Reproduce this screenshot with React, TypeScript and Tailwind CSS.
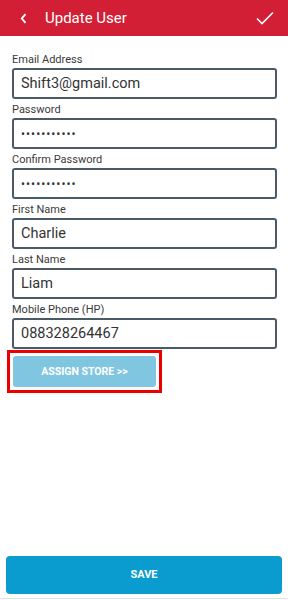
import React from "react";

const fields = [
  { label: "Email Address", value: "Shift3@gmail.com", pw: false },
  { label: "Password", value: "•••••••••••", pw: true },
  { label: "Confirm Password", value: "•••••••••••", pw: true },
  { label: "First Name", value: "Charlie", pw: false },
  { label: "Last Name", value: "Liam", pw: false },
  { label: "Mobile Phone (HP)", value: "088328264467", pw: false },
];

export default function App() {
  return (
    <div
      className="w-[288px] h-[600px] bg-white flex flex-col overflow-hidden"
      style={{ fontFamily: "Roboto, 'Noto Sans', sans-serif" }}
    >
      <div className="h-[36px] bg-[#d21f35] flex items-center shrink-0">
        <svg className="ml-[20px]" width="7" height="11" viewBox="0 0 7 11">
          <path d="M5.5 1.2 L1.8 5.5 L5.5 9.8" fill="none" stroke="white" strokeWidth="1.9" />
        </svg>
        <span className="ml-[18px] text-white text-[15px] leading-none">Update User</span>
        <div className="flex-1" />
        <svg className="mr-[14px]" width="18" height="14" viewBox="0 0 18 14">
          <path d="M1 7.5 L6 12.5 L17 1.5" fill="none" stroke="white" strokeWidth="1.6" />
        </svg>
      </div>
      <div className="pl-3 pr-[11px] pt-[13px] flex flex-col">
        {fields.map((f) => (
          <div key={f.label} className="flex flex-col">
            <div className="h-[19px] text-[11px] leading-[14px] pt-[4px] text-[#3a3a3a]">{f.label}</div>
            <div className="h-[31px] border-2 border-[#4a5a67] rounded-[3px] flex items-center pl-[7px] text-[#333]">
              <span className={f.pw ? "text-[12px] tracking-[1px] pt-[1px]" : "text-[14.5px]"}>{f.value}</span>
            </div>
          </div>
        ))}
        <div className="mt-[1px] ml-[-5px] w-[155px] border-[3px] border-[#ea0000] p-[3px]">
          <div className="h-[31px] w-[143px] bg-[#80c6e0] rounded-[3px] flex items-center justify-center text-white font-bold text-[10.5px]">
            ASSIGN STORE &gt;&gt;
          </div>
        </div>
      </div>
      <div className="flex-1" />
      <div className="px-[6px] pb-[4px]">
        <div className="h-[38px] bg-[#0a9bcf] rounded-[4px] flex items-center justify-center text-white font-bold text-[11px]">
          SAVE
        </div>
      </div>
      <div className="h-[1px] bg-[#e2e2e2]" />
      <div className="h-[1px]" />
    </div>
  );
}
